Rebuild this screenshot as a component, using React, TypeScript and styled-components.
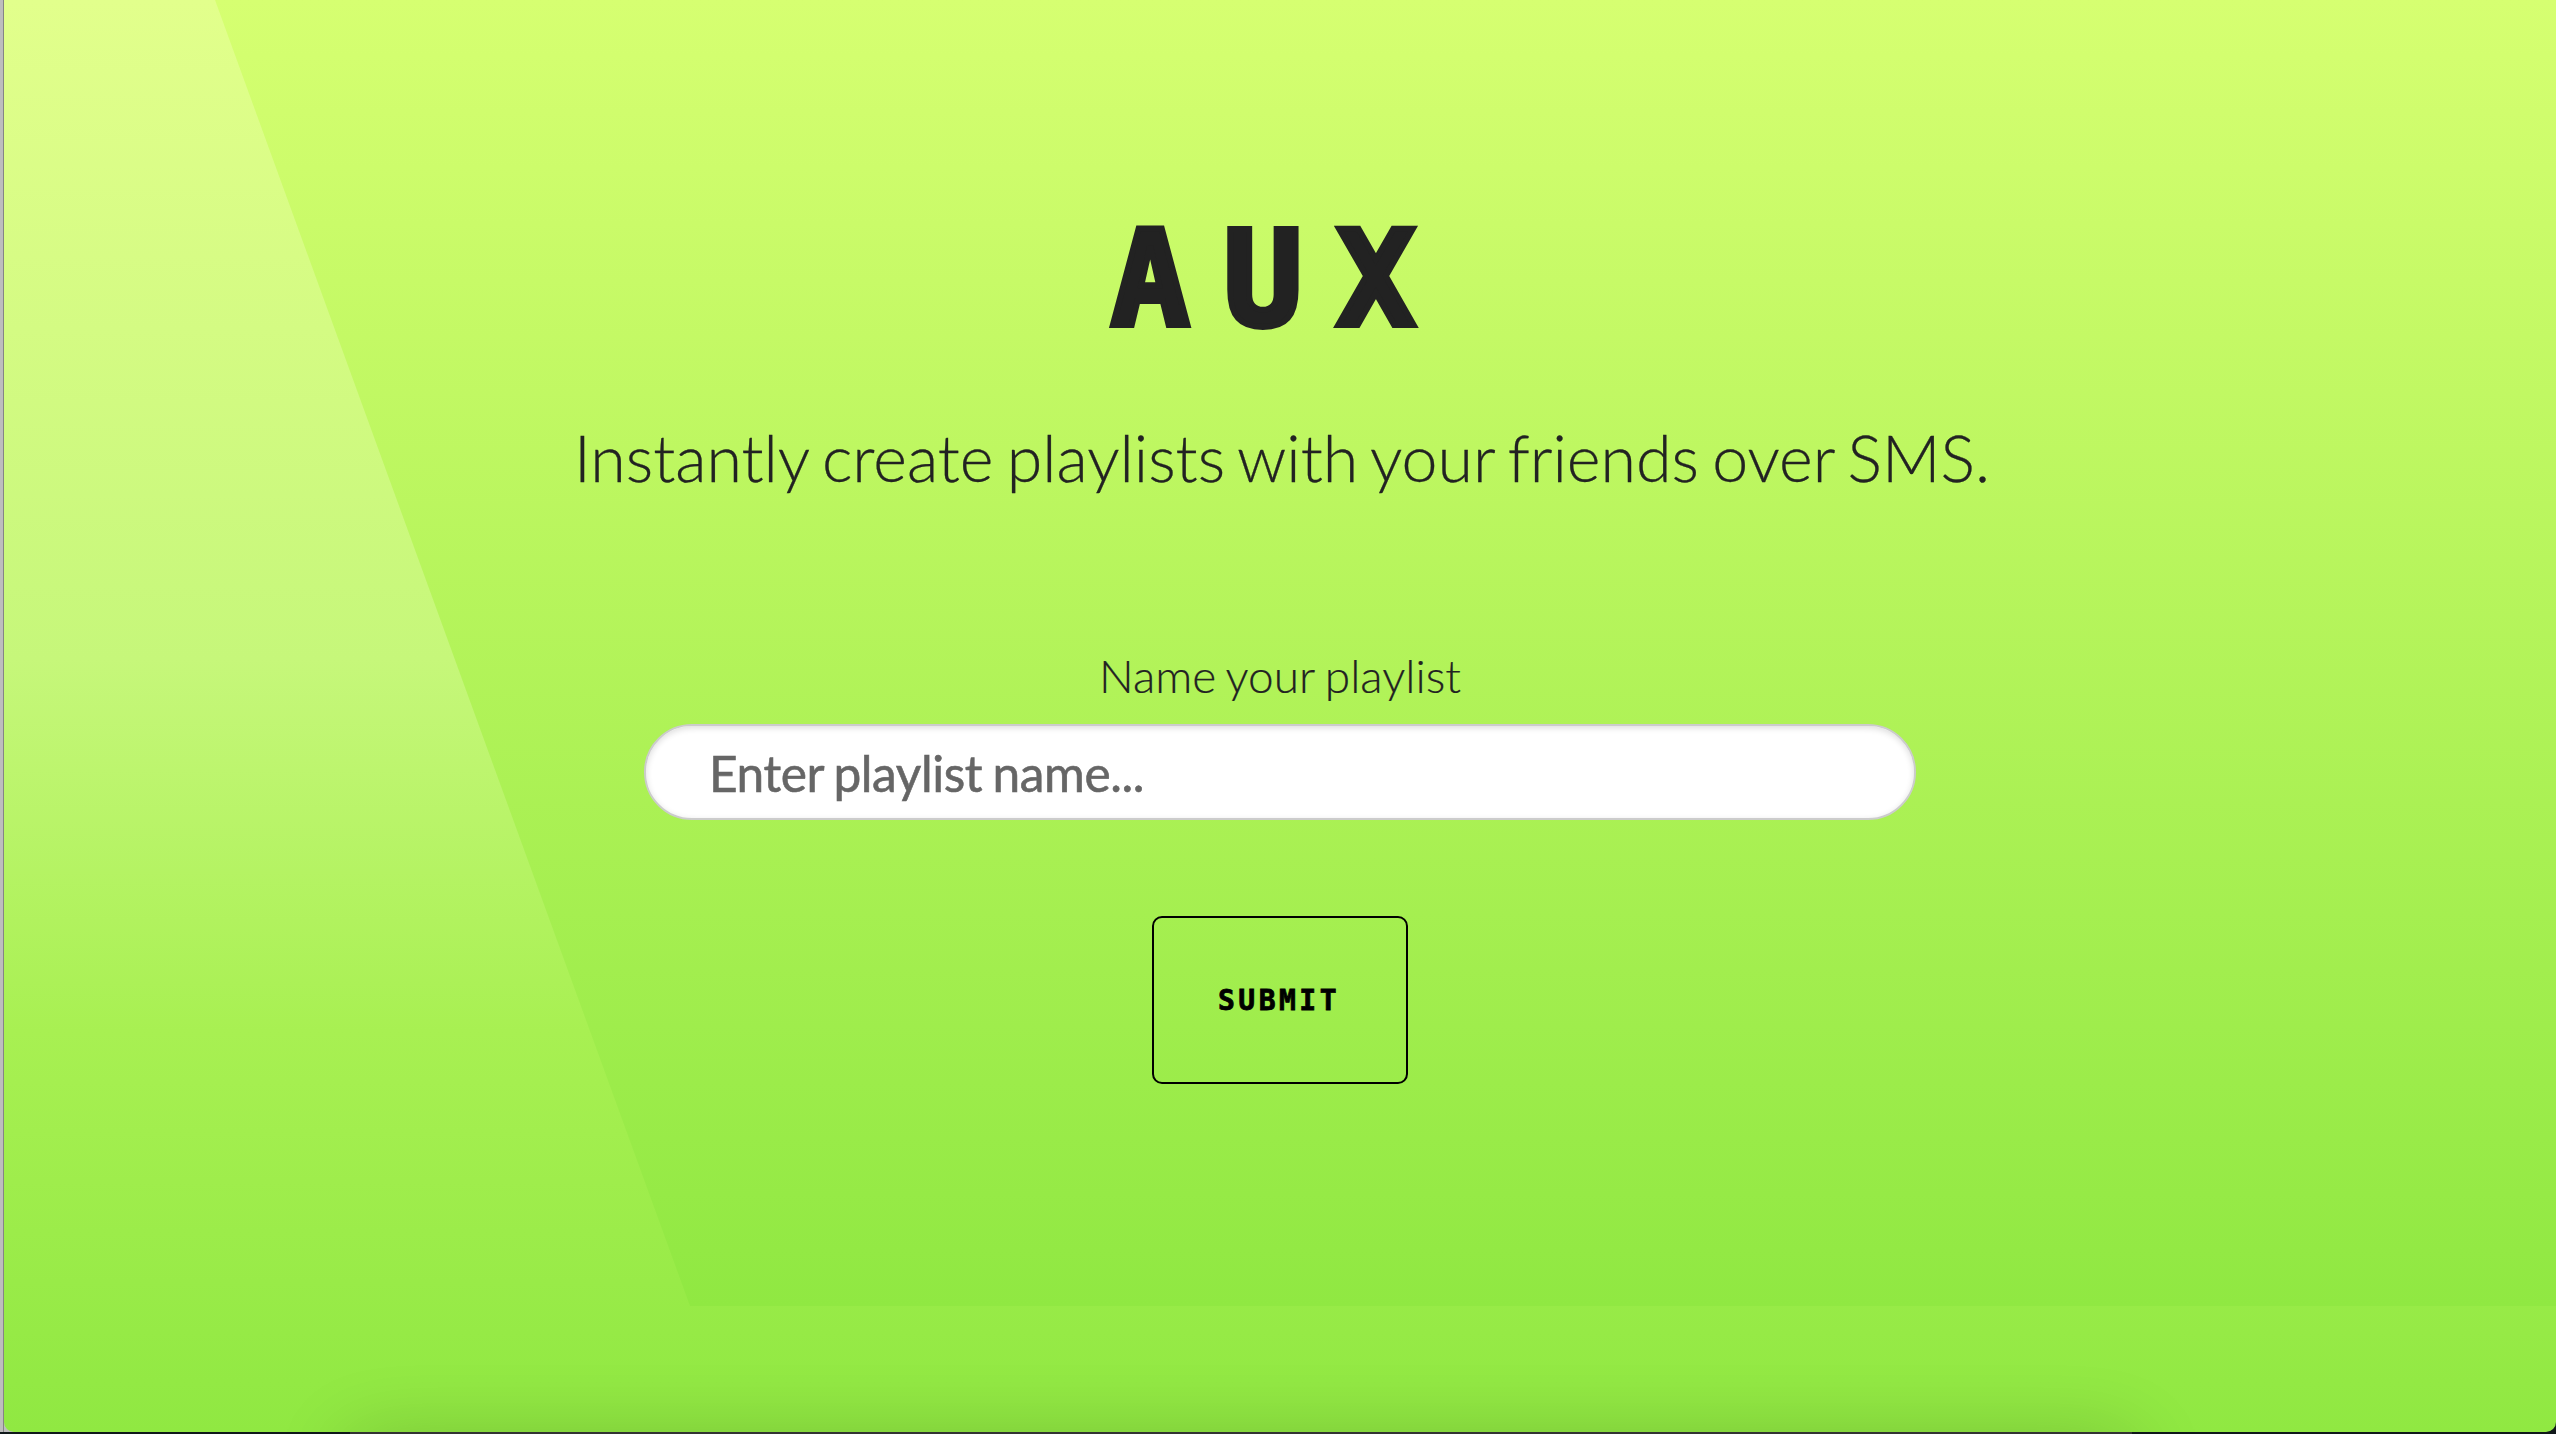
import React, { useState } from 'react';
import styled, { createGlobalStyle } from 'styled-components';

const GlobalStyle = createGlobalStyle`
  * {
    box-sizing: border-box;
  }

  body {
    margin: 0;
    overflow: hidden;
    background: #10181a;
    font-family: Lato, "Liberation Sans", sans-serif;
    color: #222222;
  }
`;

const Desktop = styled.div`
  height: 1434px;
  padding: 0 0 2px 4px;
  background: linear-gradient(to right, #bdbdbd 3px, #858585 3px, #858585 4px, #bdbdbd 4px, #bdbdbd 20px, transparent 20px) no-repeat 0 0 / 100% 1432px, #10181a;
`;

const Page = styled.main`
  height: 1432px;
  overflow: hidden;
  border-radius: 0 0 10px 10px;
  background: linear-gradient(to bottom, #e2ff8c 0%, #c6f77a 46%, #a8f052 72%, #90e842 100%);
`;

const Hero = styled.section`
  height: 1306px;
  display: flex;
  flex-direction: column;
  align-items: center;
  background: linear-gradient(to bottom, #d6ff71 0%, #90e842 100%);
  clip-path: polygon(211px 0, 100% 0, 100% 100%, 686px 100%);
`;

const Title = styled.h1`
  margin: 200px 0 0;
  height: 160px;
  font-family: "DejaVu Sans Mono", "Liberation Mono", monospace;
  font-size: 131px;
  font-weight: 700;
  line-height: 160px;
  letter-spacing: 34px;
  -webkit-text-stroke: 6px #222222;
`;

const Subtitle = styled.h2`
  margin: 57px 0 0;
  padding-left: 4px;
  font-size: 64.5px;
  font-weight: 300;
  line-height: 80px;
  word-spacing: -4.2px;
  -webkit-text-stroke: 0.3px #222222;
`;

const Form = styled.form`
  width: 1272px;
  margin-top: 151px;
  display: flex;
  flex-direction: column;
  align-items: center;
`;

const Label = styled.label`
  font-size: 46px;
  font-weight: 300;
  line-height: 56px;
  word-spacing: -2px;
  -webkit-text-stroke: 0.2px #222222;
`;

const Input = styled.input`
  width: 100%;
  height: 96px;
  margin-top: 20px;
  padding: 2px 63px 0;
  border: 2px solid #cccccc;
  border-radius: 48px;
  outline: none;
  background: #ffffff;
  box-shadow: inset 0 2px 6px #dddddd;
  font-family: Lato, "Liberation Sans", sans-serif;
  font-size: 49.6px;
  letter-spacing: -0.4px;
  word-spacing: -2px;
  color: #222222;

  &::placeholder {
    color: #666666;
    opacity: 1;
    -webkit-text-stroke: 0.6px #666666;
  }
`;

const SubmitButton = styled.button`
  width: 256px;
  height: 168px;
  margin-top: 96px;
  padding: 0 2px 0 0;
  border: 2px solid #000000;
  border-radius: 10px;
  background: transparent;
  font-family: "DejaVu Sans Mono", "Liberation Mono", monospace;
  font-size: 28px;
  font-weight: 700;
  letter-spacing: 3.5px;
  -webkit-text-stroke: 0.8px #000000;
  color: #000000;
`;

/* the dock peeking up under the browser window */
const Dock = styled.div`
  position: absolute;
  top: 1432px;
  left: 350px;
  width: 1782px;
  height: 60px;
  background: #333333;
  box-shadow: 0 10px 80px rgba(0, 0, 0, 0.2);
`;

const App = () => {
  const [playlistName, setPlaylistName] = useState("");

  const handleSubmit = (e: React.FormEvent) => {
    e.preventDefault();
    setPlaylistName("");
  }

  return (
    <Desktop>
      <GlobalStyle />
      <Page>
        <Hero>
          <Title>AUX</Title>
          <Subtitle>Instantly create playlists with your friends over SMS.</Subtitle>
          <Form onSubmit={handleSubmit}>
            <Label htmlFor="playlist">Name your playlist</Label>
            <Input
              id="playlist"
              value={playlistName}
              placeholder="Enter playlist name..."
              onChange={({ currentTarget }) => setPlaylistName(currentTarget.value)}
            />
            <SubmitButton type="submit">SUBMIT</SubmitButton>
          </Form>
        </Hero>
      </Page>
      <Dock />
    </Desktop>
  );
};

export default App;
